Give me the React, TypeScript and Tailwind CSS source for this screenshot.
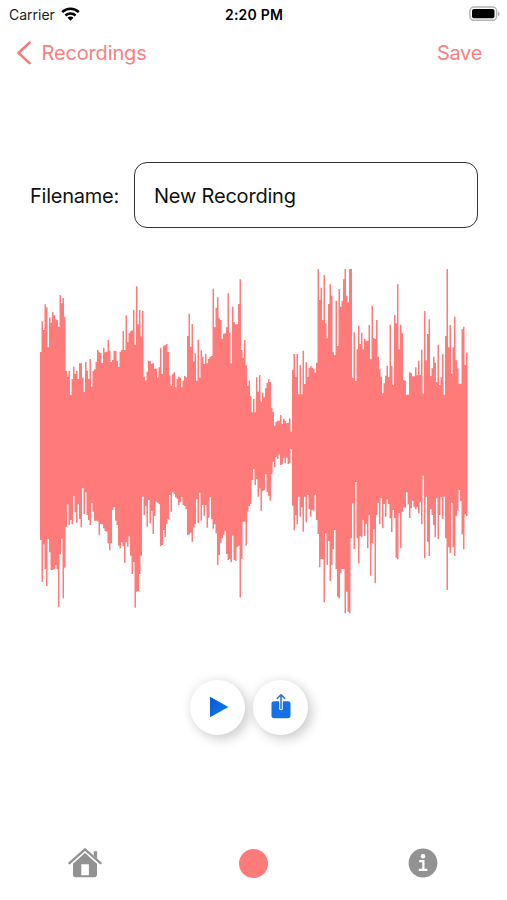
import React from 'react';

// upper and lower edge of every bar, measured from the top of the waveform (1/3 px units)
const PEAKS = [
  276, 184, 210, 133, 142, 262, 172, 188, 157, 166, 178, 180, 200, 105, 130, 114, 170, 333, 350, 332,
  405, 357, 320, 342, 332, 357, 310, 310, 353, 396, 306, 332, 357, 297, 380, 333, 328, 306, 270, 277,
  279, 309, 263, 277, 275, 239, 272, 306, 300, 272, 273, 303, 320, 275, 270, 213, 270, 166, 246, 220,
  214, 211, 150, 254, 79, 193, 150, 229, 153, 350, 362, 335, 302, 303, 312, 309, 326, 326, 353, 322,
  263, 342, 257, 256, 252, 275, 347, 378, 343, 337, 382, 357, 350, 353, 382, 362, 348, 352, 228, 161,
  260, 192, 305, 280, 362, 239, 353, 271, 290, 312, 281, 310, 297, 290, 288, 86, 202, 143, 112, 175,
  180, 236, 221, 220, 202, 100, 218, 310, 140, 187, 193, 193, 132, 58, 270, 293, 240, 316, 378, 362,
  408, 457, 417, 457, 352, 395, 345, 425, 398, 412, 385, 368, 358, 366, 444, 456, 497, 485, 482, 482,
  465, 492, 476, 482, 490, 488, 475, 515, 330, 282, 350, 282, 403, 315, 403, 272, 372, 307, 350, 323,
  318, 323, 327, 338, 308, 27, 120, 83, 180, 45, 190, 235, 132, 73, 107, 277, 285, 122, 258, 87,
  140, 122, 58, 27, 107, 127, 27, 27, 353, 217, 363, 268, 197, 252, 218, 268, 236, 242, 242, 195,
  298, 137, 234, 237, 180, 290, 328, 350, 400, 370, 347, 317, 352, 194, 317, 375, 165, 190, 73, 268,
  194, 220, 360, 362, 404, 404, 337, 340, 349, 349, 322, 346, 302, 345, 269, 401, 153, 301, 222, 178,
  348, 325, 290, 308, 366, 254, 375, 352, 283, 404, 228, 27, 262, 195, 341, 262, 170, 301, 325, 371,
  371, 208, 200, 315, 278,
];

const TROUGHS = [
  840, 966, 853, 927, 978, 837, 877, 930, 930, 927, 915, 927, 1040, 883, 836, 1015, 923, 800, 733, 795,
  780, 793, 708, 757, 788, 733, 777, 802, 685, 762, 697, 765, 780, 795, 730, 755, 782, 782, 784, 826,
  792, 793, 805, 813, 815, 850, 871, 850, 750, 742, 782, 795, 857, 865, 847, 858, 908, 847, 860, 829,
  887, 942, 906, 1043, 995, 993, 942, 887, 710, 765, 737, 800, 720, 790, 752, 822, 768, 725, 728, 732,
  858, 855, 810, 831, 792, 778, 705, 755, 697, 703, 712, 716, 735, 727, 712, 735, 738, 748, 826, 823,
  818, 845, 803, 792, 718, 790, 698, 782, 735, 767, 735, 803, 773, 712, 778, 806, 793, 820, 915, 885,
  848, 835, 825, 813, 882, 900, 897, 907, 827, 900, 903, 860, 857, 1012, 897, 785, 785, 857, 755, 738,
  733, 660, 627, 675, 657, 710, 685, 752, 693, 690, 643, 697, 707, 722, 643, 605, 622, 590, 597, 583,
  615, 613, 593, 610, 593, 612, 610, 568, 737, 811, 765, 793, 710, 770, 742, 815, 710, 787, 705, 748,
  770, 750, 752, 704, 780, 822, 922, 897, 897, 1027, 820, 915, 843, 963, 915, 868, 810, 928, 1010, 1015,
  940, 927, 927, 1060, 995, 1055, 1060, 835, 730, 867, 666, 835, 910, 828, 832, 780, 828, 792, 865, 765,
  947, 850, 808, 970, 765, 728, 793, 715, 805, 732, 770, 718, 732, 775, 816, 750, 775, 893, 898, 760,
  865, 755, 742, 743, 697, 733, 774, 745, 722, 742, 747, 740, 760, 727, 793, 647, 895, 710, 845, 888,
  748, 765, 795, 832, 715, 837, 765, 710, 777, 710, 835, 990, 862, 878, 728, 862, 888, 767, 752, 690,
  722, 823, 868, 763, 768,
];

function Waveform() {
  const top = PEAKS.map((y, i) => `L${i} ${y}H${i + 1}`).join('');
  const bottom = TROUGHS.map((y, i) => `L${i + 1} ${y}H${i}`).reverse().join('');

  return (
    <svg
      viewBox={`0 0 ${PEAKS.length} 1080`}
      preserveAspectRatio="none"
      className="block w-[427.5px] h-[360px]"
    >
      <path d={`M0 540${top}${bottom}Z`} fill="#ff7b7a" />
    </svg>
  );
}

function StatusBar() {
  return (
    <div className="grid grid-cols-3 items-center h-7 pl-[8px] pr-[7px] text-[14px] text-[#1c1c1c]">
      <div className="flex items-center gap-[6px] pl-px">
        <span>Carrier</span>
        <svg width="19" height="14" viewBox="0 0 19 14" fill="none" stroke="#000" strokeWidth="2.5">
          <path d="M1.2 5.1C5.8 .6 13.2 .6 17.8 5.1" />
          <path d="M4.4 8.5C7.3 5.7 11.7 5.7 14.6 8.5" />
          <path d="M9.5 13.8L6.5 10.8C8.2 9.2 10.8 9.2 12.5 10.8Z" fill="#000" stroke="none" />
        </svg>
      </div>
      <span className="text-center font-semibold text-black whitespace-nowrap tracking-[0.2px]">2:20 PM</span>
      <svg width="32" height="16" viewBox="0 0 32 16" className="justify-self-end">
        <rect x="1.9" y="1.1" width="26.7" height="13.2" rx="4" fill="#fff" stroke="#b3b3b3" strokeWidth="1.5" />
        <rect x="4" y="3.1" width="22.5" height="9.2" rx="2" fill="#000" />
        <path d="M30 5.4C32 6.2 32 9.2 30 10Z" fill="#aaa" />
      </svg>
    </div>
  );
}

function NavBar() {
  return (
    <div className="flex items-center justify-between h-[49px] pl-[16px] pr-[25px] text-[20px] text-[#f98080]">
      <button className="flex items-center gap-[9.5px]">
        <svg width="16" height="24" viewBox="0 0 16 24" fill="none" stroke="#fa7777" strokeWidth="2.6" strokeLinecap="round" strokeLinejoin="round">
          <path d="M13.5 1.7L2.5 11.9L13.5 22.1" />
        </svg>
        <span className="tracking-[-0.15px]">Recordings</span>
      </button>
      <button className="tracking-[-0.3px]">Save</button>
    </div>
  );
}

function RoundButton({ children }: { children: React.ReactNode }) {
  return (
    <button className="flex items-center justify-center w-[55px] h-[55px] rounded-full bg-white shadow-[4px_4px_12px_rgba(0,0,0,0.2),-3px_-3px_10px_rgba(0,0,0,0.04)]">
      {children}
    </button>
  );
}

function TabBar() {
  return (
    <div className="grid grid-cols-3 justify-items-center items-center h-[36px]">
      <svg width="34" height="32" viewBox="0 0 34 32" fill="#929292">
        <path d="M1.5 16.2L17 2.3L32.5 16.2" fill="none" stroke="#929292" strokeWidth="2.3" strokeLinecap="round" strokeLinejoin="round" />
        <path d="M25.8 4.3H29.1V11.8L25.8 8.8Z" />
        <path fillRule="evenodd" d="M17 6L29 16.8V27.5Q29 30.2 26.3 30.2H7.7Q5 30.2 5 27.5V16.8ZM13.3 17.2V28.2H20.9V17.2Z" />
      </svg>
      <div className="w-[29px] h-[29px] rounded-full bg-[#ff7b7a]" />
      <svg width="30" height="30" viewBox="0 0 30 30">
        <circle cx="15" cy="15" r="14.4" fill="#929292" />
        <circle cx="15" cy="8.3" r="2.3" fill="#fff" />
        <path d="M11.2 13.2H15.4V21.4M10.8 21.8H19.4" fill="none" stroke="#fff" strokeWidth="2.2" />
      </svg>
    </div>
  );
}

export default function App() {
  return (
    <div className="flex flex-col w-[507px] h-[900px] overflow-hidden bg-white font-['Inter','Liberation_Sans',sans-serif]">
      <StatusBar />
      <NavBar />

      <div className="flex items-center mt-[85px] pl-[30px] pr-[29px] text-[20px] text-[#111]">
        <label className="w-[104px] shrink-0 pt-[2px] tracking-[-0.25px]">Filename:</label>
        <div className="flex-1 flex items-center h-[66px] pt-[2px] pl-[19px] border-[1.5px] border-[#333] rounded-[13px] tracking-[-0.2px]">
          New Recording
        </div>
      </div>

      <div className="mt-[32px] pl-[40px]">
        <Waveform />
      </div>

      <div className="flex justify-center gap-[8px] mt-[60px] pr-[9px]">
        <RoundButton>
          <svg width="20" height="22" viewBox="0 0 20 22" className="ml-[3px] mb-px">
            <defs>
              <linearGradient id="play" x1="0" y1="0" x2="1" y2="1">
                <stop offset="0" stopColor="#0a58c8" />
                <stop offset="1" stopColor="#0a7cff" />
              </linearGradient>
            </defs>
            <path d="M1 .8L19.4 11L1 21.2Z" fill="url(#play)" />
          </svg>
        </RoundButton>
        <RoundButton>
          <svg width="20" height="26" viewBox="0 0 20 26" className="mb-[3px]">
            <rect x=".5" y="8.2" width="19" height="17" rx="2.6" fill="#1671e6" />
            <path d="M8.2 8H11.8V16.3Q10 18.2 8.2 16.3Z" fill="#fff" />
            <path d="M10 16V2M5.8 5.8L10 1.7L14.2 5.8" fill="none" stroke="#2b6fc2" strokeWidth="1.5" />
          </svg>
        </RoundButton>
      </div>

      <div className="mt-auto mb-[19px]">
        <TabBar />
      </div>
    </div>
  );
}
